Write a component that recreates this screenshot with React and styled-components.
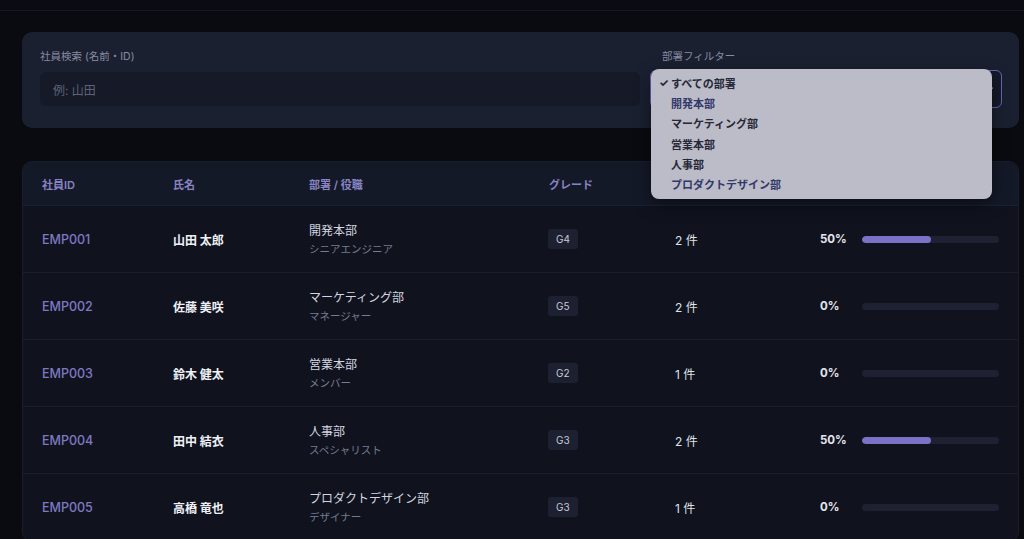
import React from "react";
import styled, { createGlobalStyle } from "styled-components";

const Global = createGlobalStyle`
  html, body { margin: 0; padding: 0; background: #0a0b10; }
  body {
    font-family: "Inter", "Noto Sans CJK JP", sans-serif;
    color: #e6e8f0;
    -webkit-font-smoothing: antialiased;
  }
  * { box-sizing: border-box; }
`;

const TopBar = styled.div`
  height: 11px;
  border-bottom: 1px solid #151827;
  background: #0b0c13;
`;

const Page = styled.main`
  padding: 21px 5px 0 22px;
  display: flex;
  flex-direction: column;
  gap: 33px;
`;

const FilterCard = styled.section`
  background: #1b2031;
  border-radius: 10px;
  padding: 18px 17px 20px 18px;
  display: grid;
  grid-template-columns: 1fr 352px;
  column-gap: 10px;
`;

const Field = styled.div`
  display: flex;
  flex-direction: column;
  gap: 8px;
  position: relative;
`;

const Label = styled.label`
  font-size: 10.5px;
  line-height: 14px;
  color: #878ca3;
  padding-left: ${(p) => p.$indent || 0}px;
`;

const Input = styled.div`
  height: 34px;
  border-radius: 6px;
  background: #161a28;
  display: flex;
  align-items: center;
  padding: 0 13px;
  font-size: 12px;
  color: #5d6278;
`;

const Select = styled.div`
  height: 38px;
  margin-top: -2px;
  border-radius: 6px;
  border: 1px solid #6a64bf;
  background: #161a28;
  display: flex;
  align-items: center;
  justify-content: flex-end;
  padding: 0 6px;
  color: #9094aa;
`;

const Popup = styled.ul`
  position: absolute;
  left: 1px;
  top: 19px;
  width: 341px;
  margin: 0;
  padding: 4px 0 5px;
  list-style: none;
  background: #bbbcc7;
  border-radius: 8px;
  box-shadow: 0 6px 18px rgba(0, 0, 0, 0.45);
  z-index: 5;
`;

const Option = styled.li`
  height: 20.2px;
  display: flex;
  align-items: center;
  font-size: 11px;
  font-weight: 700;
  color: ${(p) => (p.$tint ? "#33386a" : "#262838")};
  padding-left: 8px;
`;

const Check = styled.span`
  width: 12px;
  font-size: 11px;
  color: #1e2030;
`;

const TableCard = styled.section`
  background: #10131e;
  border: 1px solid #1a1e2c;
  border-radius: 10px;
  overflow: hidden;
`;

const cols = "131px 136px 240px 126px 145px 1fr";

const HeadRow = styled.div`
  display: grid;
  grid-template-columns: ${cols};
  height: 44px;
  align-items: center;
  padding-left: 19px;
  background: #141928;
  border-bottom: 1px solid #1c2132;
`;

const HeadCell = styled.div`
  font-size: 11px;
  font-weight: 600;
  color: #8884c4;
`;

const Row = styled.div`
  display: grid;
  grid-template-columns: ${cols};
  height: 67px;
  align-items: center;
  padding-left: 19px;
  padding-right: 19px;
  border-bottom: 1px solid #1a1e2b;
`;

const Id = styled.div`
  font-size: 12.5px;
  font-weight: 500;
  color: #7d79c2;
`;

const Name = styled.div`
  font-size: 12px;
  font-weight: 700;
  color: #eef0f6;
`;

const Dept = styled.div`
  display: flex;
  flex-direction: column;
  gap: 3px;
  margin-top: -1px;
`;

const DeptName = styled.span`
  font-size: 12px;
  color: #d3d6e0;
`;

const Role = styled.span`
  font-size: 10.5px;
  color: #767b90;
`;

const Badge = styled.span`
  justify-self: start;
  margin-left: -1px;
  background: #1c2030;
  color: #c7cad8;
  font-size: 10px;
  border-radius: 3px;
  padding: 3px 8px;
  line-height: 14px;
`;

const Count = styled.div`
  font-size: 12px;
  color: #dfe1ea;
`;

const Progress = styled.div`
  display: flex;
  align-items: center;
`;

const Pct = styled.span`
  width: 42px;
  font-size: 11.5px;
  font-weight: 700;
  color: #e3e5ee;
`;

const Track = styled.div`
  flex: 1;
  height: 7px;
  border-radius: 4px;
  background: #1d2131;
  overflow: hidden;
`;

const Fill = styled.div`
  height: 100%;
  border-radius: 4px;
  background: #7a72c6;
`;

const employees = [
  { id: "EMP001", name: "山田 太郎", dept: "開発本部", role: "シニアエンジニア", grade: "G4", count: "2 件", pct: 50 },
  { id: "EMP002", name: "佐藤 美咲", dept: "マーケティング部", role: "マネージャー", grade: "G5", count: "2 件", pct: 0 },
  { id: "EMP003", name: "鈴木 健太", dept: "営業本部", role: "メンバー", grade: "G2", count: "1 件", pct: 0 },
  { id: "EMP004", name: "田中 結衣", dept: "人事部", role: "スペシャリスト", grade: "G3", count: "2 件", pct: 50 },
  { id: "EMP005", name: "高橋 竜也", dept: "プロダクトデザイン部", role: "デザイナー", grade: "G3", count: "1 件", pct: 0 },
];

const departments = [
  { label: "すべての部署", checked: true },
  { label: "開発本部", tint: true },
  { label: "マーケティング部" },
  { label: "営業本部" },
  { label: "人事部" },
  { label: "プロダクトデザイン部", tint: true },
];

function Chevron() {
  return (
    <svg width="10" height="10" viewBox="0 0 10 10" fill="none">
      <path d="M2.5 4l2.5 2.5L7.5 4" stroke="#8f93a8" strokeWidth="1.2" strokeLinecap="round" strokeLinejoin="round" />
    </svg>
  );
}

export default function App() {
  return (
    <>
      <Global />
      <TopBar />
      <Page>
        <FilterCard>
          <Field>
            <Label>社員検索 (名前・ID)</Label>
            <Input>例: 山田</Input>
          </Field>
          <Field>
            <Label $indent={12}>部署フィルター</Label>
            <Select>
              <Chevron />
            </Select>
            <Popup>
              {departments.map((d) => (
                <Option key={d.label} $tint={d.tint}>
                  <Check>{d.checked ? "✓" : ""}</Check>
                  {d.label}
                </Option>
              ))}
            </Popup>
          </Field>
        </FilterCard>

        <TableCard>
          <HeadRow>
            <HeadCell>社員ID</HeadCell>
            <HeadCell>氏名</HeadCell>
            <HeadCell>部署 / 役職</HeadCell>
            <HeadCell>グレード</HeadCell>
            <HeadCell />
            <HeadCell />
          </HeadRow>
          {employees.map((e) => (
            <Row key={e.id}>
              <Id>{e.id}</Id>
              <Name>{e.name}</Name>
              <Dept>
                <DeptName>{e.dept}</DeptName>
                <Role>{e.role}</Role>
              </Dept>
              <Badge>{e.grade}</Badge>
              <Count>{e.count}</Count>
              <Progress>
                <Pct>{e.pct}%</Pct>
                <Track>
                  <Fill style={{ width: `${e.pct}%` }} />
                </Track>
              </Progress>
            </Row>
          ))}
        </TableCard>
      </Page>
    </>
  );
}
